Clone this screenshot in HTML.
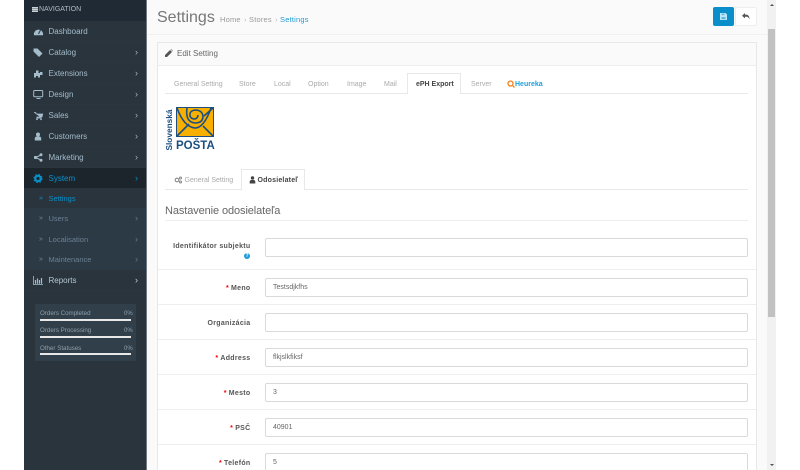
<!DOCTYPE html>
<html><head><meta charset="utf-8"><style>
html,body{margin:0;padding:0;width:800px;height:470px;overflow:hidden;background:#fff;font-family:"Liberation Sans",sans-serif}
.a{position:absolute;white-space:nowrap}
#wrap{position:relative;width:800px;height:470px;overflow:hidden;background:#fff;filter:blur(.25px)}
.m{position:absolute;left:24px;width:122px;height:21px;border-bottom:1px solid #2a3640;box-sizing:border-box}
.m .t{position:absolute;left:24.5px;top:6px;font-size:8px;line-height:10px;color:#a5bccb}
.m svg.i{position:absolute;left:9px;top:4.5px}
.c{position:absolute;left:111px;top:5px;font-size:9px;line-height:10px;color:#9fb5c4}
.s{border:0}.s .t{color:#6b8092;font-size:7.5px}
.s .b{position:absolute;left:15px;top:6px;font-size:7px;line-height:10px;color:#6f8494}
.s .c{color:#64798a}
.tab{position:absolute;top:80px;font-size:7px;line-height:10px;color:#aaa}
.lb{position:absolute;right:549.5px;font-size:7px;line-height:10px;font-weight:bold;color:#555;letter-spacing:.3px;white-space:nowrap}
.lb i{color:#f00;font-style:normal;margin-right:2px}
.in{position:absolute;left:265px;width:483px;height:19px;box-sizing:border-box;border:1px solid #d9d9d9;border-radius:2px;background:#fff;font-size:7px;line-height:17px;padding-left:7px;color:#666}
.sep{position:absolute;left:158px;width:598px;height:1px;background:#eee}
.st{position:absolute;left:40px;font-size:6.2px;line-height:8px;color:#8fa0ad}
.sp{position:absolute;left:124px;font-size:6px;line-height:8px;color:#8fa0ad}
.bar{position:absolute;left:40px;width:91px;height:2px;background:#e8e8e8}
</style></head><body><div id="wrap">

<!-- sidebar -->
<div class="a" style="left:24px;top:0;width:122px;height:470px;background:#29343d"></div>
<div class="a" style="left:146px;top:0;width:1px;height:470px;background:#6f7a82"></div>
<div class="a" style="left:24px;top:0;width:122px;height:21px;background:#1f2a34"></div>
<div class="a" style="left:32px;top:7px;width:6px;height:5px;background:repeating-linear-gradient(#ccd3d8 0 1px,#8d979e 1px 2px)"></div>
<div class="a" style="left:39px;top:4.5px;font-size:7px;line-height:10px;color:#aebcc6">NAVIGATION</div>

<div class="m" style="top:21px"><svg class="i" width="11" height="11" viewBox="0 0 11 11"><path d="M1 9.2A4.6 4.6 0 1 1 10 9.2Z" fill="#a5bccb"/><path d="M5.5 8L7.5 4" stroke="#29343d" stroke-width="1"/></svg><div class="t">Dashboard</div></div>
<div class="m" style="top:42px"><svg class="i" width="11" height="11" viewBox="0 0 11 11"><path d="M.5 1.5H4.5L9.5 6.5 6 10 .5 4.5Z" fill="#a5bccb"/></svg><div class="t">Catalog</div><div class="c">›</div></div>
<div class="m" style="top:63px"><svg class="i" width="11" height="11" viewBox="0 0 11 11"><path d="M1 9.5V5H3V2.5H5.5V5H7V4H9.5V7H7V9.5H5V8H3V9.5Z" fill="#a5bccb"/></svg><div class="t">Extensions</div><div class="c">›</div></div>
<div class="m" style="top:84px"><svg class="i" width="11" height="11" viewBox="0 0 11 11"><rect x=".7" y="1.5" width="9" height="6.2" rx="1" fill="none" stroke="#a5bccb"/><path d="M3.5 9.5H7.5" stroke="#a5bccb"/></svg><div class="t">Design</div><div class="c">›</div></div>
<div class="m" style="top:105px"><svg class="i" width="11" height="11" viewBox="0 0 11 11"><path d="M1 2.5H2.8L3.3 4H9.8L9 7H4L3.7 8H8.5" fill="#a5bccb" stroke="#a5bccb" stroke-width=".7"/><circle cx="4" cy="9.3" r=".9" fill="#a5bccb"/><circle cx="8" cy="9.3" r=".9" fill="#a5bccb"/></svg><div class="t">Sales</div><div class="c">›</div></div>
<div class="m" style="top:126px"><svg class="i" width="11" height="11" viewBox="0 0 11 11"><circle cx="5" cy="3.5" r="2" fill="#a5bccb"/><path d="M1.8 9.5V7.3Q2 5.7 3.5 5.5H6.5Q8 5.7 8.2 7.3V9.5Z" fill="#a5bccb"/></svg><div class="t">Customers</div><div class="c">›</div></div>
<div class="m" style="top:147px"><svg class="i" width="11" height="11" viewBox="0 0 11 11"><path d="M2.5 5.5L8 3M2.5 5.5L8 8" stroke="#a5bccb"/><circle cx="2.5" cy="5.5" r="1.6" fill="#a5bccb"/><circle cx="8" cy="2.8" r="1.5" fill="#a5bccb"/><circle cx="8" cy="8.2" r="1.5" fill="#a5bccb"/></svg><div class="t">Marketing</div><div class="c">›</div></div>
<div class="m" style="top:168px;height:20px;background:#1d252c;border:0"><svg class="i" width="11" height="11" viewBox="0 0 11 11"><circle cx="5" cy="5.5" r="2.7" fill="none" stroke="#0a8fca" stroke-width="2.2"/><circle cx="5" cy="5.5" r="4" fill="none" stroke="#0a8fca" stroke-width="1.2" stroke-dasharray="1.6 1.6"/></svg><div class="t" style="color:#0a8fca">System</div><div class="c" style="color:#0a8fca">›</div></div>
<div class="a" style="left:24px;top:188px;width:122px;height:82px;background:#2c3a46"></div>
<div class="a" style="left:24px;top:188px;width:122px;height:20px;background:#29343d"></div>
<div class="m s" style="top:188px"><div class="b" style="color:#0a8fca">»</div><div class="t" style="color:#0a8fca">Settings</div></div>
<div class="m s" style="top:208px"><div class="b">»</div><div class="t">Users</div><div class="c">›</div></div>
<div class="m s" style="top:229px"><div class="b">»</div><div class="t">Localisation</div><div class="c">›</div></div>
<div class="m s" style="top:249px"><div class="b">»</div><div class="t">Maintenance</div><div class="c">›</div></div>
<div class="m" style="top:270px"><svg class="i" width="11" height="11" viewBox="0 0 11 11"><path d="M.5 1V9.5H10" fill="none" stroke="#a5bccb" stroke-width=".8"/><path d="M2.5 5V8.7M4.5 3.5V8.7M6.5 5V8.7M8.5 3V8.7" stroke="#a5bccb" stroke-width="1.2"/></svg><div class="t" style="color:#b5c8d4">Reports</div><div class="c" style="color:#c0d0da">›</div></div>

<div class="a" style="left:35px;top:304px;width:101px;height:57px;background:#303f4a"></div>
<div class="st" style="top:310px">Orders Completed</div><div class="sp" style="top:310px">0%</div><div class="bar" style="top:319px"></div>
<div class="st" style="top:327px">Orders Processing</div><div class="sp" style="top:327px">0%</div><div class="bar" style="top:336px"></div>
<div class="st" style="top:344.5px">Other Statuses</div><div class="sp" style="top:344.5px">0%</div><div class="bar" style="top:353px"></div>

<!-- content -->
<div class="a" style="left:147px;top:0;width:620px;height:470px;background:#fafafa"></div>
<div class="a" style="left:147px;top:34px;width:620px;height:1px;background:#f0f0f0"></div>
<div class="a" style="left:157px;top:7.5px;font-size:16px;line-height:20px;color:#777">Settings</div>
<div class="a" style="left:220px;top:14.5px;font-size:7.5px;line-height:10px;color:#999;letter-spacing:.2px">Home</div>
<div class="a" style="left:244px;top:14.5px;font-size:7.5px;line-height:10px;color:#bbb">›</div>
<div class="a" style="left:249px;top:14.5px;font-size:7.5px;line-height:10px;color:#999;letter-spacing:.2px">Stores</div>
<div class="a" style="left:275px;top:14.5px;font-size:7.5px;line-height:10px;color:#bbb">›</div>
<div class="a" style="left:280px;top:14.5px;font-size:7.5px;line-height:10px;color:#1e9cd7;letter-spacing:.2px">Settings</div>

<div class="a" style="left:713px;top:7px;width:21px;height:19px;background:#0a8fca;border-radius:2px"></div>
<svg class="a" style="left:720px;top:13px" width="7" height="7" viewBox="0 0 7 7"><path d="M0 0H5.5L7 1.5V7H0Z" fill="#bfe6f7"/><rect x="1.5" y=".6" width="3" height="1.6" fill="#5db9e2"/><rect x="1.5" y="4" width="4" height="2.2" fill="#5db9e2"/></svg>
<div class="a" style="left:735px;top:7px;width:22px;height:19px;box-sizing:border-box;border:1px solid #eee;background:#fff;border-radius:2px"></div>
<svg class="a" style="left:742px;top:13px" width="8" height="7" viewBox="0 0 8 7"><path d="M3 0V1.6H4.5Q7.5 1.8 7.5 6.5 6.5 3.8 4.5 3.8H3V5.4L0 2.7Z" fill="#555"/></svg>

<!-- panel -->
<div class="a" style="left:157px;top:42px;width:600px;height:440px;box-sizing:border-box;border:1px solid #e8e8e8;background:#fff"></div>
<div class="a" style="left:158px;top:43px;width:598px;height:22px;background:#fafafa;border-bottom:1px solid #eee"></div>
<svg class="a" style="left:165px;top:49px" width="8" height="8" viewBox="0 0 8 8"><path d="M0 8V6L5 1 7 3 2 8ZM5.6.4L6 0 8 2 7.6 2.4Z" fill="#555"/></svg>
<div class="a" style="left:177px;top:48.5px;font-size:8px;line-height:10px;color:#666">Edit Setting</div>

<!-- tabs -->
<div class="a" style="left:165px;top:93px;width:583px;height:1px;background:#e8e8e8"></div>
<div class="tab" style="left:174px">General Setting</div>
<div class="tab" style="left:239px">Store</div>
<div class="tab" style="left:274px">Local</div>
<div class="tab" style="left:308px">Option</div>
<div class="tab" style="left:347px">Image</div>
<div class="tab" style="left:384px">Mail</div>
<div class="a" style="left:407px;top:73px;width:54px;height:21px;box-sizing:border-box;border:1px solid #e8e8e8;border-bottom:0;background:#fff"></div>
<div class="tab" style="left:416px;color:#444;font-weight:bold">ePH Export</div>
<div class="tab" style="left:471px">Server</div>
<svg class="a" style="left:507px;top:80px" width="8" height="8" viewBox="0 0 8 8"><circle cx="3.5" cy="3.5" r="2.5" fill="none" stroke="#f58220" stroke-width="1.3"/><path d="M5.3 5.3L7.5 7.5" stroke="#f58220" stroke-width="1.3"/></svg>
<div class="a" style="left:515px;top:80px;font-size:7px;line-height:10px;font-weight:bold;color:#1ea0dc">Heureka</div>

<!-- logo -->
<div class="a" style="left:176px;top:107px;width:38px;height:30px;background:#f8b000;box-sizing:border-box;border:1px solid #1c4f80"></div>
<svg class="a" style="left:176px;top:107px" width="38" height="30" viewBox="0 0 38 30"><g fill="none" stroke="#1c4f80" stroke-width="1.6"><path d="M1 29L13 17"/><path d="M37 29L27 19"/><path d="M1 1Q8 20 19 21 28 21 35 1"/><path d="M11 1Q9 15 19 16 27 16 27 9 26 3 19 3 13 4 14 9 15 12 19 12 22 11 22 8"/><path d="M37 1L28 9"/></g></svg>
<div class="a" style="left:176px;top:139.5px;font-size:11.5px;line-height:12px;font-weight:bold;color:#1c4f80">POŠTA</div>
<div class="a" style="left:168.5px;top:130px;width:0;height:0"><div style="position:absolute;left:-25px;top:-6px;width:50px;height:12px;transform:rotate(-90deg);font-size:8.3px;line-height:12px;font-weight:bold;color:#1c4f80;text-align:center">Slovenská</div></div>

<!-- subtabs -->
<div class="a" style="left:165px;top:189px;width:583px;height:1px;background:#e8e8e8"></div>
<svg class="a" style="left:174px;top:176px" width="8" height="8" viewBox="0 0 8 8"><circle cx="3" cy="4" r="1.8" fill="none" stroke="#888" stroke-width="1.1"/><circle cx="6.5" cy="2" r="1" fill="none" stroke="#888"/><circle cx="6.5" cy="6" r="1" fill="none" stroke="#888"/></svg>
<div class="tab" style="left:184.5px;top:175.5px;color:#aaa">General Setting</div>
<div class="a" style="left:241px;top:169px;width:64px;height:21px;box-sizing:border-box;border:1px solid #e8e8e8;border-bottom:0;background:#fff"></div>
<svg class="a" style="left:249px;top:176px" width="7" height="8" viewBox="0 0 7 8"><circle cx="3.5" cy="2" r="1.7" fill="#444"/><path d="M.7 7.5V5.5Q1 4 2.5 4H4.5Q6 4 6.3 5.5V7.5Z" fill="#444"/></svg>
<div class="tab" style="left:257.5px;top:175.5px;color:#444;font-weight:bold;letter-spacing:.2px">Odosielateľ</div>

<div class="a" style="left:165px;top:203.5px;font-size:11px;line-height:14px;color:#666;letter-spacing:-.1px">Nastavenie odosielateľa</div>
<div class="a" style="left:165px;top:220px;width:583px;height:1px;background:#eee"></div>

<!-- form -->
<div class="lb" style="top:242px">Identifikátor subjektu</div>
<div class="a" style="left:244px;top:253px;width:6px;height:6px;border-radius:50%;background:#1e9cd7;color:#fff;font-size:5px;line-height:6px;text-align:center;font-weight:bold">?</div>
<div class="in" style="top:238px"></div>
<div class="sep" style="top:269px"></div>
<div class="lb" style="top:283.5px"><i>*</i>Meno</div><div class="in" style="top:278px">Testsdjkfhs</div>
<div class="sep" style="top:304px"></div>
<div class="lb" style="top:318.5px">Organizácia</div><div class="in" style="top:313px"></div>
<div class="sep" style="top:339px"></div>
<div class="lb" style="top:353.5px"><i>*</i>Address</div><div class="in" style="top:348px">flkjslkfiksf</div>
<div class="sep" style="top:374px"></div>
<div class="lb" style="top:388.5px"><i>*</i>Mesto</div><div class="in" style="top:383px">3</div>
<div class="sep" style="top:409px"></div>
<div class="lb" style="top:423.5px"><i>*</i>PSČ</div><div class="in" style="top:418px">40901</div>
<div class="sep" style="top:444px"></div>
<div class="lb" style="top:458.5px"><i>*</i>Telefón</div><div class="in" style="top:453px">5</div>

<!-- scrollbar -->
<div class="a" style="left:767px;top:0;width:9px;height:470px;background:#f1f1f1"></div>
<div class="a" style="left:768px;top:29px;width:7px;height:288px;background:#c1c1c1"></div>
<div class="a" style="left:769.5px;top:3.5px;width:0;height:0;border:2px solid transparent;border-top:0;border-bottom:2.5px solid #505050"></div>
<div class="a" style="left:769.5px;top:464px;width:0;height:0;border:2px solid transparent;border-bottom:0;border-top:2.5px solid #505050"></div>

</div></body></html>
